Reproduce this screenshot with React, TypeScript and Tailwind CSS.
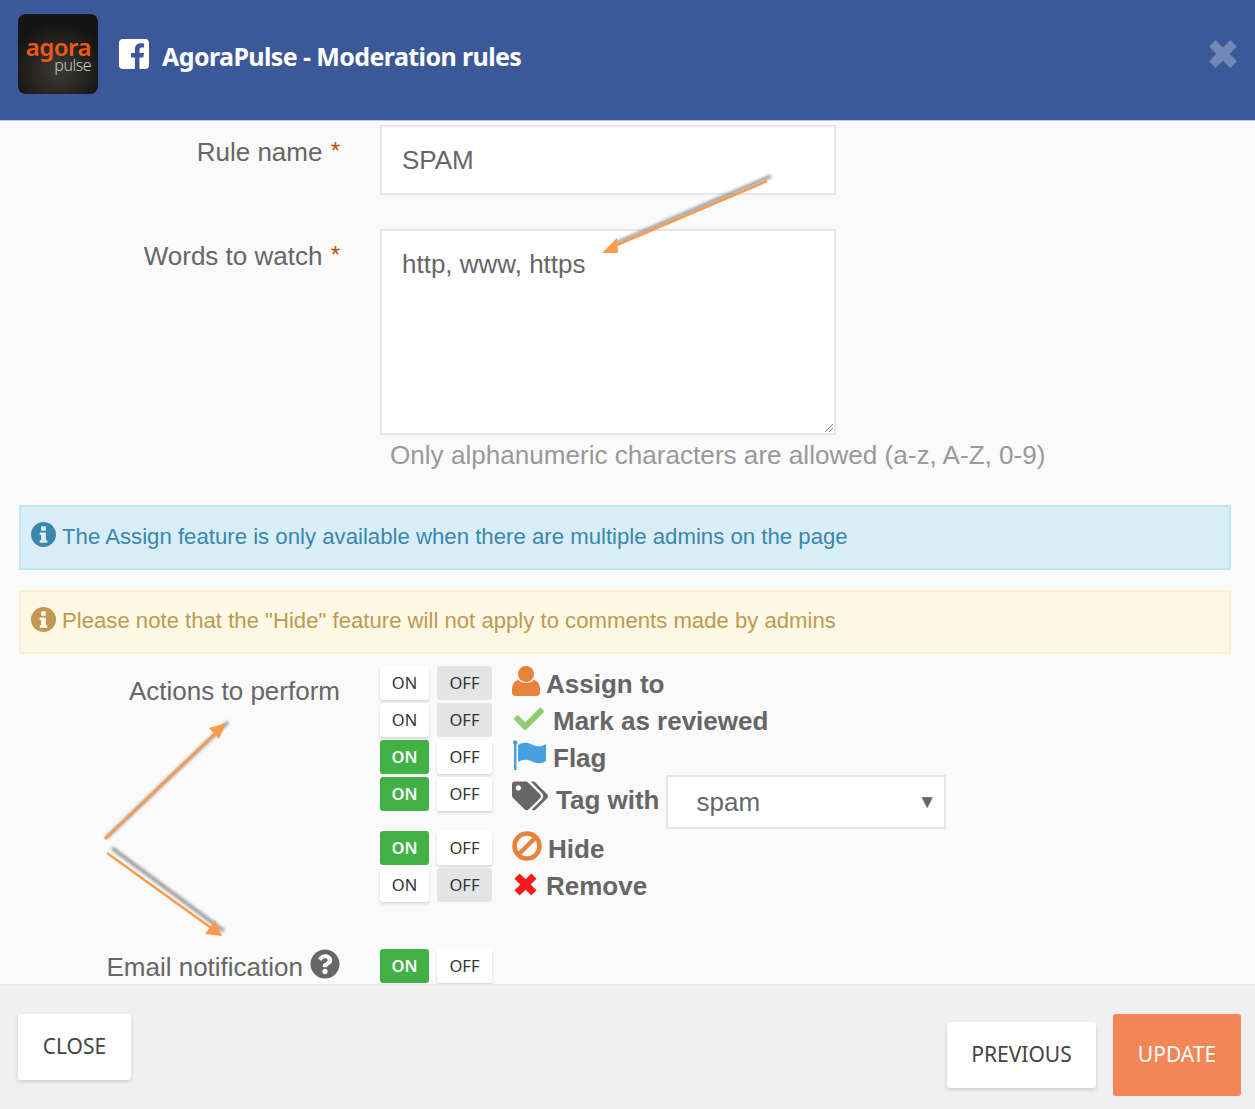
import React from 'react';
import { FaCheck, FaTags, FaQuestionCircle } from 'react-icons/fa';

const Toggle = ({ on, grey }: { on: boolean; grey?: boolean }) => (
  <div className="flex gap-2 shrink-0 font-['Noto_Sans',sans-serif] text-[16.5px]">
    <div className={`w-[49px] h-[34px] flex items-center justify-center rounded-[3px] ${on ? 'bg-[#41b045] text-white font-semibold' : 'bg-white text-[#333] shadow-[0_2px_3px_rgba(0,0,0,0.15)]'}`}>
      ON
    </div>
    <div className={`w-[55px] h-[34px] flex items-center justify-center rounded-[3px] text-[#333] ${grey ? 'bg-[#e4e4e4]' : 'bg-white shadow-[0_2px_3px_rgba(0,0,0,0.15)]'}`}>
      OFF
    </div>
  </div>
);

const FacebookIcon = () => (
  <svg width="30" height="30" viewBox="0 0 30 30" className="ml-[21px] shrink-0">
    <path
      fillRule="evenodd"
      fill="#fff"
      d="M4 0h22a4 4 0 0 1 4 4v22a4 4 0 0 1-4 4h-5.5V18.5h3.8l.6-4.6h-4.4v-3c0-1.4.4-2.3 2.3-2.3h2.3V4.4c-.4-.1-1.8-.2-3.4-.2-3.4 0-5.7 2.1-5.7 5.9v3.8H12v4.6h3.9V30H4a4 4 0 0 1-4-4V4a4 4 0 0 1 4-4z"
    />
  </svg>
);

const UserIcon = () => (
  <svg width="28" height="30" viewBox="0 0 28 30" className="shrink-0 -mt-[6px]">
    <circle cx="14" cy="8" r="8" fill="#e8813a" />
    <path d="M6 14c2 2 5 3 8 3s6-1 8-3c4 1 6 5 6 10v2a4 4 0 0 1-4 4H4a4 4 0 0 1-4-4v-2c0-5 2-9 6-10z" fill="#e8813a" />
  </svg>
);

const BanIcon = () => (
  <svg width="30" height="30" viewBox="0 0 30 30" className="shrink-0 -mt-[7px]">
    <circle cx="15" cy="15" r="12.5" fill="none" stroke="#e8813a" strokeWidth="4.5" />
    <path d="M7 23 L23 7" stroke="#e8813a" strokeWidth="4.5" />
  </svg>
);

const FlagIcon = () => (
  <svg width="34" height="30" viewBox="0 0 34 30" className="shrink-0 -mt-[6px] ml-[1px]">
    <rect x="1" y="2" width="2.5" height="28" fill="#4a9fe0" />
    <circle cx="2.2" cy="2.5" r="2.2" fill="#4a9fe0" />
    <path d="M5 5c5-3 9-3 14-.5s9 2.5 14-.5v17c-5 3-9 3-14 .5s-9-2.5-14 .5z" fill="#4a9fe0" />
  </svg>
);

const InfoIcon = ({ color, back }: { color: string; back: string }) => (
  <svg width="25" height="25" viewBox="0 0 26 26" className="shrink-0 -mt-[6px]">
    <circle cx="13" cy="13" r="13" fill={color} />
    <rect x="10.5" y="4.5" width="5" height="4.5" rx="0.5" fill={back} />
    <path d="M9 11h6.5v8H17v2.5H9V19h1.5v-5.5H9z" fill={back} />
  </svg>
);

const Cross = ({ size, color, className }: { size: number; color: string; className?: string }) => (
  <svg width={size} height={size} viewBox="0 0 24 24" className={`shrink-0 ${className ?? ''}`}>
    <path d="M4.5 4.5 L19.5 19.5 M19.5 4.5 L4.5 19.5" stroke={color} strokeWidth="6.5" />
  </svg>
);

const Action = ({ icon, label, gap, on, grey }: { icon: React.ReactNode; label: string; gap: string; on: boolean; grey?: boolean }) => (
  <div className="flex h-[34px] items-start">
    <Toggle on={on} grey={grey} />
    <div className={`ml-5 flex items-center h-[36px] text-[26px] font-bold text-[#666] ${gap}`}>
      {icon}
      <span>{label}</span>
    </div>
  </div>
);

const Logo = () => (
  <div className="w-20 h-20 rounded-lg bg-[radial-gradient(circle_at_50%_70%,#3d3a36,#141414_70%)] flex flex-col items-end justify-center pr-[7px] font-['Noto_Sans',sans-serif] shrink-0">
    <span className="text-[24px] font-semibold text-[#f15a0e] leading-[22px] tracking-[-0.5px]">agora</span>
    <span className="text-[16px] font-light text-[#c9c9c9] leading-[14px] tracking-[-0.5px]">pulse</span>
  </div>
);

const Arrows = () => (
  <svg className="absolute inset-0 pointer-events-none" width="1255" height="1109">
    <defs>
      <filter id="soft" x="-20%" y="-20%" width="140%" height="140%">
        <feGaussianBlur stdDeviation="1.6" />
      </filter>
    </defs>
    <g stroke="#777" strokeWidth="3.5" fill="none" filter="url(#soft)" opacity="0.75">
      <path d="M771 176 L616 243" />
      <path d="M106 838 L228 722" />
      <path d="M112 848 L224 931" />
    </g>
    <g stroke="#f99a4d" strokeWidth="2.5" fill="none">
      <path d="M767 181 L612 247" />
      <path d="M105 839 L220 729" />
      <path d="M107 853 L214 930" />
    </g>
    <g fill="#f99a4d">
      <path d="M602 253 L617 238 L618 253 Z" />
      <path d="M226 723 L219 739 L209 728 Z" />
      <path d="M222 936 L205 934 L215 920 Z" />
    </g>
  </svg>
);

export default function App() {
  return (
    <div className="relative w-[1255px] h-[1109px] overflow-hidden flex flex-col bg-[#fafafa] font-['Liberation_Sans',sans-serif]">
      <header className="h-[121px] shrink-0 bg-[#3b5998] border-b border-[#b9c4da] flex items-center pl-[18px] pr-[15px]">
        <div className="flex items-center w-full -mt-[12px]">
          <Logo />
          <FacebookIcon />
          <h1 className="ml-[13px] mt-[6px] text-[25px] font-bold text-white font-['Noto_Sans',sans-serif] tracking-[-0.6px]">AgoraPulse - Moderation rules</h1>
          <Cross size={34} color="#7288b6" className="ml-auto" />
        </div>
      </header>

      <main className="flex-1 overflow-hidden pt-1">
        <div className="flex">
          <label className="w-[340px] text-right text-[26px] text-[#666] pt-2 leading-[36px]">
            Rule name <span className="text-[#c8470c] text-[24px] ml-[1px] align-[2px]">*</span>
          </label>
          <div className="ml-10 w-[456px] h-[70px] bg-white border-2 border-[#e6e6e6] flex items-center pl-5 text-[26px] text-[#666]">SPAM</div>
        </div>

        <div className="flex mt-[34px]">
          <label className="w-[340px] text-right text-[26px] text-[#666] pt-2 leading-[36px]">
            Words to watch <span className="text-[#c8470c] text-[24px] ml-[1px] align-[2px]">*</span>
          </label>
          <div className="relative ml-10 w-[456px] h-[206px] bg-white border-2 border-[#e6e6e6] pl-5 pt-[15px] text-[26px] leading-[36px] text-[#666]">
            http, www, https
            <svg className="absolute right-0 bottom-0" width="10" height="10" viewBox="0 0 10 10">
              <path d="M1 9 L9 1 M5 9 L9 5" stroke="#777" strokeWidth="1" />
            </svg>
          </div>
        </div>

        <p className="ml-[390px] mt-[5px] h-[30px] leading-[30px] text-[26.1px] text-[#999] whitespace-nowrap">Only alphanumeric characters are allowed (a-z, A-Z, 0-9)</p>

        <div className="ml-[19px] mr-6 mt-[35px] h-[65px] bg-[#d9edf7] border-2 border-[#bce8f1] flex items-center pl-[10px] text-[22.2px] text-[#3a87ad]">
          <InfoIcon color="#3a87ad" back="#d9edf7" />
          <span className="ml-[6px] pb-[2px]">The Assign feature is only available when there are multiple admins on the page</span>
        </div>
        <div className="ml-[19px] mr-6 mt-5 h-[64px] bg-[#fcf8e3] border-2 border-[#fbeed5] flex items-center pl-[10px] text-[22.15px] text-[#c09853]">
          <InfoIcon color="#c09853" back="#fcf8e3" />
          <span className="ml-[6px] pb-[2px]">Please note that the "Hide" feature will not apply to comments made by admins</span>
        </div>

        <div className="flex mt-3">
          <label className="w-[340px] text-right text-[26px] text-[#666] leading-[36px] pt-[7px]">Actions to perform</label>
          <div className="ml-10 flex flex-col gap-[3px]">
            <Action on={false} grey label="Assign to" gap="gap-[6px]" icon={<UserIcon />} />
            <Action on={false} grey label="Mark as reviewed" gap="gap-[9px] pl-[2px]" icon={<FaCheck size={30} className="text-[#93cb73] -mt-[5px]" />} />
            <Action on label="Flag" gap="gap-[6px]" icon={<FlagIcon />} />
            <div className="flex h-[51px] items-start">
              <Toggle on />
              <div className="ml-5 flex items-start text-[26px] font-bold text-[#666]">
                <FaTags size={36} className="shrink-0 mt-[1px]" />
                <span className="ml-2 mt-[5px] leading-[36px]">Tag with</span>
                <div className="ml-[6px] -mt-[2px] w-[280px] h-[54px] bg-white border-2 border-[#e6e6e6] flex items-center justify-between pl-[29px] pr-[7px] text-[26px] font-normal text-[#666]">
                  spam
                  <span className="text-[19px] text-[#666]">▼</span>
                </div>
              </div>
            </div>
            <Action on label="Hide" gap="gap-[6px]" icon={<BanIcon />} />
            <Action on={false} grey label="Remove" gap="gap-[7px]" icon={<Cross size={27} color="#fa1a1a" className="-mt-[3px]" />} />
          </div>
        </div>

        <div className="flex mt-[47px]">
          <label className="w-[340px] flex justify-end items-center h-[34px] gap-[7px] text-[26px] text-[#666] pt-[2px]">
            Email notification
            <FaQuestionCircle size={30} className="shrink-0 -mt-[6px]" />
          </label>
          <div className="ml-10">
            <Toggle on />
          </div>
        </div>
      </main>

      <footer className="h-[125px] shrink-0 bg-[#f0f0f0] border-t-2 border-[#e9e9e9] flex items-start pl-[18px] pr-[14px] font-['Noto_Sans',sans-serif] text-[21px]">
        <button className="mt-[28px] w-[113px] h-[66px] bg-white rounded-[3px] text-[#444] shadow-[0_2px_4px_rgba(0,0,0,0.15)]">CLOSE</button>
        <button className="ml-auto mt-[36px] w-[149px] h-[66px] bg-white rounded-[3px] text-[#444] shadow-[0_2px_4px_rgba(0,0,0,0.15)]">PREVIOUS</button>
        <button className="ml-[17px] mt-[28px] w-[128px] h-[82px] bg-[#f38557] rounded-[3px] text-white">UPDATE</button>
      </footer>

      <Arrows />
    </div>
  );
}
